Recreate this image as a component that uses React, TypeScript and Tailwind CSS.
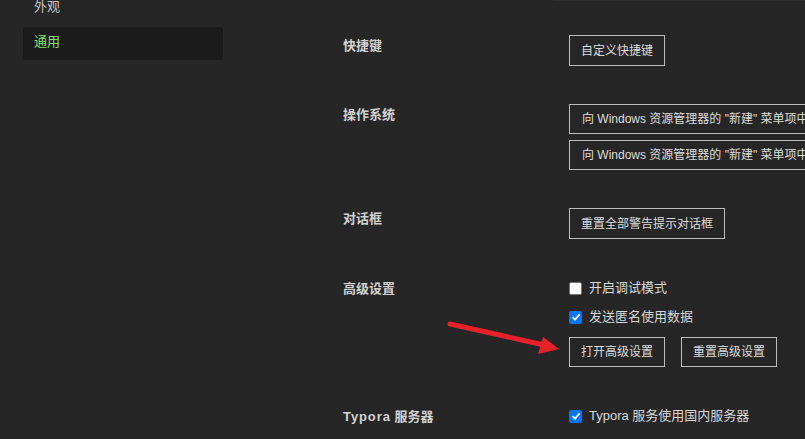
import React from "react"

const font = {
  fontFamily: '"Liberation Sans", "Noto Sans CJK SC", sans-serif',
}

function Btn({ children }: { children: React.ReactNode }) {
  return (
    <button className="h-[31px] border border-[#bcbcbc] bg-transparent px-[11px] text-[12px] leading-[20px] text-[#dedede] whitespace-nowrap">
      {children}
    </button>
  )
}

function Check({ checked, label }: { checked?: boolean; label: string }) {
  return (
    <label className="flex h-[20px] items-center gap-[7px] text-[13px] leading-[20px] text-[#d8d8d8]">
      {checked ? (
        <span className="flex h-[13px] w-[13px] items-center justify-center rounded-[2px] bg-[#0075ff]">
          <svg width="10" height="10" viewBox="0 0 10 10">
            <path d="M1.6 5.2 L4 7.6 L8.6 2.4" fill="none" stroke="#fff" strokeWidth="1.8" />
          </svg>
        </span>
      ) : (
        <span className="h-[13px] w-[13px] rounded-[2px] border border-[#767676] bg-white" />
      )}
      <span>{label}</span>
    </label>
  )
}

function Row({
  label,
  className,
  children,
}: {
  label: React.ReactNode
  className?: string
  children: React.ReactNode
}) {
  return (
    <div className={"flex items-start " + (className ?? "")}>
      <div className="w-[226px] pt-px text-[13px] font-bold leading-[20px] text-[#d2d2d2]">
        {label}
      </div>
      <div className="flex flex-col">{children}</div>
    </div>
  )
}

export default function App() {
  return (
    <div
      className="relative flex h-[439px] w-[805px] overflow-hidden bg-[#262626]"
      style={font}
    >
      <div className="absolute left-[553px] right-0 top-0 h-px bg-[#303030]" />

      {/* sidebar */}
      <div className="w-[223px] shrink-0 pl-[23px]">
        <div className="mt-[-8px] flex flex-col gap-[2px]">
          <div className="flex h-[33px] items-center pb-[4px] pl-[11px] text-[13px] text-[#c4c4c4]">
            外观
          </div>
          <div className="flex h-[33px] items-center rounded-[3px] bg-[#1b1b1b] pb-[4px] pl-[11px] text-[13px] text-[#86e070]">
            通用
          </div>
        </div>
      </div>

      {/* settings */}
      <div className="flex flex-col pl-[120px] pt-[35px]">
        <Row label="快捷键">
          <Btn>自定义快捷键</Btn>
        </Row>

        <Row label="操作系统" className="mt-[38px]">
          <div className="flex flex-col gap-[6px]">
            <button className="h-[30px] w-[300px] border border-[#bcbcbc] px-[12px] text-left text-[12px] whitespace-nowrap text-[#dedede]">
              向 Windows 资源管理器的 {'"'}新建{'"'} 菜单项中添加 Markdown 文件
            </button>
            <button className="h-[30px] w-[300px] border border-[#bcbcbc] px-[12px] text-left text-[12px] whitespace-nowrap text-[#dedede]">
              向 Windows 资源管理器的 {'"'}新建{'"'} 菜单项中删除 Markdown 文件
            </button>
          </div>
        </Row>

        <Row label="对话框" className="mt-[38px]">
          <Btn>重置全部警告提示对话框</Btn>
        </Row>

        <Row label="高级设置" className="mt-[39px]">
          <Check label="开启调试模式" />
          <div className="mt-[9px]">
            <Check checked label="发送匿名使用数据" />
          </div>
          <div className="mt-[10px] flex gap-[16px]">
            <button className="h-[30px] border border-[#bcbcbc] px-[11px] text-[12px] text-[#dedede]">
              打开高级设置
            </button>
            <button className="h-[30px] border border-[#bcbcbc] px-[11px] text-[12px] text-[#dedede]">
              重置高级设置
            </button>
          </div>
        </Row>

        <Row
          label={
            <>
              <span className="tracking-[0.9px]">Typora</span> 服务器
            </>
          }
          className="mt-[39px]"
        >
          <Check checked label="Typora 服务使用国内服务器" />
        </Row>
      </div>

      {/* annotation arrow */}
      <svg
        className="pointer-events-none absolute left-0 top-0"
        width="805"
        height="439"
        viewBox="0 0 805 439"
      >
        <line
          x1="450"
          y1="324"
          x2="544"
          y2="345"
          stroke="#e8202a"
          strokeWidth="5"
          strokeLinecap="round"
        />
        <polygon points="559,349 543,337 538,354" fill="#e8202a" />
      </svg>
    </div>
  )
}
